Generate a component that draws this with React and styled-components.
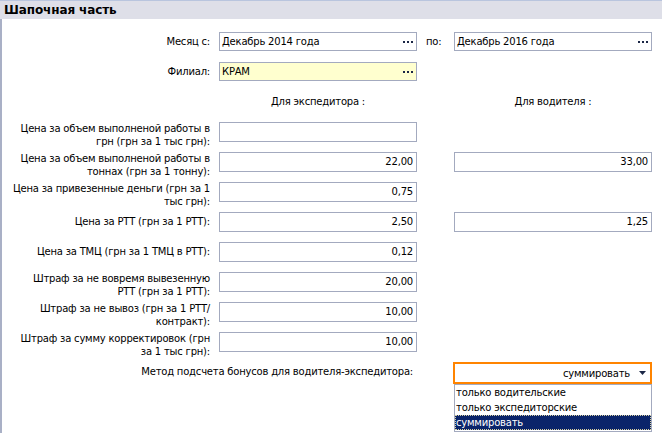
import React from "react";
import styled, { createGlobalStyle } from "styled-components";

const GlobalStyle = createGlobalStyle`
	body {
		margin: 0;
		background: #fff;
		font-family: "DejaVu Sans", "Liberation Sans", sans-serif;
		font-size: 10px;
		letter-spacing: -0.2px;
		color: #000;
	}
`;

const Panel = styled.div`
	width: 662px;
	height: 433px;
	overflow: hidden;
	border-top: 1px solid #b9c5de;
	box-sizing: border-box;
`;

const Header = styled.div`
	height: 18px;
	line-height: 18px;
	padding-left: 4px;
	background-color: #dedfe8;
	font-weight: bold;
	font-size: 12px;
	letter-spacing: -0.1px;
`;

const Body = styled.div`
	height: 414px;
	border-left: 2px solid #a9b0c6;
	padding-top: 13px;
	box-sizing: border-box;
	display: grid;
	grid-template-columns: 217px 198px 37px 198px;
	grid-auto-rows: 30px;
	align-items: start;
`;

const FieldLabel = styled.div`
	grid-column: ${(p) => p.$span || "auto"};
	min-height: 19px;
	padding-right: ${(p) => (p.$span ? 4 : 9)}px;
	display: flex;
	align-items: center;
	justify-content: flex-end;
	text-align: right;
	line-height: 13px;
`;

const MidLabel = styled.div`
	height: 19px;
	line-height: 19px;
	padding-left: 9px;
`;

const Heading = styled.div`
	padding-top: 3px;
	line-height: 13px;
	text-align: center;
`;

const Blank = styled.div``;

const Picker = styled.div`
	height: 19px;
	box-sizing: border-box;
	border: 1px solid #a3aabf;
	background-color: ${(p) => (p.$yellow ? "#ffffcf" : "#fff")};
	display: flex;
	align-items: center;
	justify-content: space-between;
	padding: 0 3px 0 2px;
`;

const NumField = styled.div`
	height: 20px;
	box-sizing: border-box;
	border: 1px solid #a3aabf;
	padding-right: 3px;
	line-height: 18px;
	text-align: right;
`;

const SelectWrap = styled.div`
	position: relative;
`;

const Select = styled.div`
	height: 22px;
	margin-left: -1px;
	box-sizing: border-box;
	border: 2px solid #ff8400;
	display: flex;
	align-items: center;
	justify-content: flex-end;
	gap: 9px;
	padding-right: 4px;
`;

const DropList = styled.div`
	position: absolute;
	top: 22px;
	left: 0;
	width: 198px;
	box-sizing: border-box;
	border: 1px solid #a3aabf;
	background: #fff;
	padding: 0 0 1px;
`;

const DropItem = styled.div`
	height: 15px;
	line-height: 15px;
	padding-left: 1px;
	background-color: ${(p) => (p.$selected ? "#0a246a" : "transparent")};
	color: ${(p) => (p.$selected ? "#fff" : "#000")};
	outline: ${(p) => (p.$selected ? "1px dotted #d8d0a0" : "none")};
	outline-offset: -1px;
`;

const Dots = () => (
	<svg width="10" height="2" viewBox="0 0 10 2">
		<rect x="0" y="0" width="2" height="2" fill="#1b2746" />
		<rect x="4" y="0" width="2" height="2" fill="#1b2746" />
		<rect x="8" y="0" width="2" height="2" fill="#1b2746" />
	</svg>
);

const Arrow = () => (
	<svg width="7" height="4" viewBox="0 0 7 4">
		<path d="M0 0h7L3.5 4z" fill="#1b2746" />
	</svg>
);

const rows = [
	{ label: ["Цена за объем выполненой работы в", "грн (грн за 1 тыс грн):"], exp: "" },
	{ label: ["Цена за объем выполненой работы в", "тоннах (грн за 1 тонну):"], exp: "22,00", drv: "33,00" },
	{ label: ["Цена за привезенные деньги (грн за 1", "тыс грн):"], exp: "0,75" },
	{ label: ["Цена за РТТ (грн за 1 РТТ):"], exp: "2,50", drv: "1,25" },
	{ label: ["Цена за ТМЦ (грн за 1 ТМЦ в РТТ):"], exp: "0,12" },
	{ label: ["Штраф за не вовремя вывезенную", "РТТ (грн за 1 РТТ):"], exp: "20,00" },
	{ label: ["Штраф за не вывоз (грн за 1 РТТ/", "контракт):"], exp: "10,00" },
	{ label: ["Штраф за сумму корректировок (грн", "за 1 тыс грн):"], exp: "10,00" },
];

const options = ["только водительские", "только экспедиторские", "суммировать"];

export default function App() {
	return (
		<>
			<GlobalStyle />
			<Panel>
				<Header>Шапочная часть</Header>
				<Body>
					<FieldLabel>Месяц с:</FieldLabel>
					<Picker>
						<span>Декабрь 2014 года</span>
						<Dots />
					</Picker>
					<MidLabel>по:</MidLabel>
					<Picker>
						<span>Декабрь 2016 года</span>
						<Dots />
					</Picker>

					<FieldLabel>Филиал:</FieldLabel>
					<Picker $yellow>
						<span>КРАМ</span>
						<Dots />
					</Picker>
					<Blank />
					<Blank />

					<Blank />
					<Heading>Для экспедитора :</Heading>
					<Blank />
					<Heading>Для водителя :</Heading>

					{rows.map((r, i) => (
						<React.Fragment key={i}>
							<FieldLabel>
								<div>
									{r.label.map((line, j) => (
										<div key={j}>{line}</div>
									))}
								</div>
							</FieldLabel>
							<NumField>{r.exp}</NumField>
							<Blank />
							{r.drv ? <NumField>{r.drv}</NumField> : <Blank />}
						</React.Fragment>
					))}

					<FieldLabel $span="1 / 3">Метод подсчета бонусов для водителя-экспедитора:</FieldLabel>
					<Blank />
					<SelectWrap>
						<Select>
							<span>суммировать</span>
							<Arrow />
						</Select>
						<DropList>
							{options.map((o, i) => (
								<DropItem key={o} $selected={i === options.length - 1}>
									{o}
								</DropItem>
							))}
						</DropList>
					</SelectWrap>
				</Body>
			</Panel>
		</>
	);
}
